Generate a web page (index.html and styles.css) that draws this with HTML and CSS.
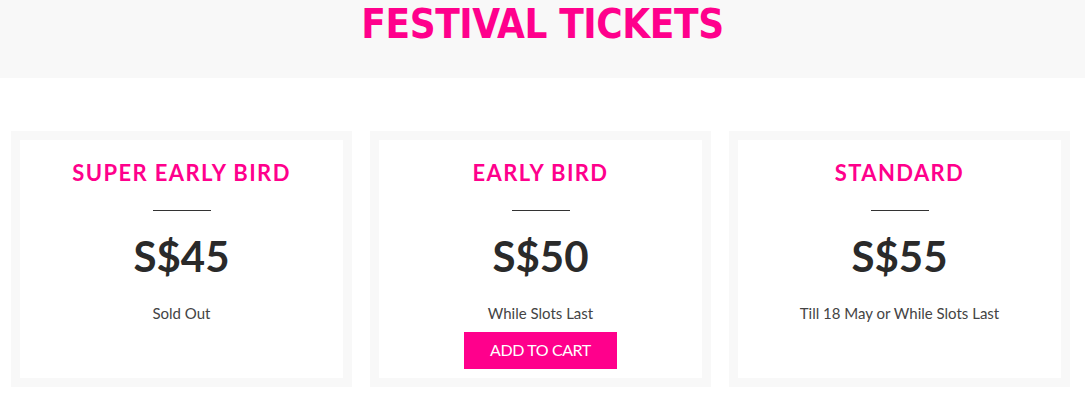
FILE: index.html
```html
<!DOCTYPE html>
<html lang="en">
<head>
<meta charset="utf-8">
<title>Festival Tickets</title>
<link rel="stylesheet" href="styles.css">
</head>
<body>
<header class="banner">
  <h1 class="banner-title">FESTIVAL TICKETS</h1>
</header>
<main class="tickets">
  <section class="card">
    <h2 class="card-title">SUPER EARLY BIRD</h2>
    <hr class="divider">
    <div class="price">S$45</div>
    <p class="note">Sold Out</p>
  </section>
  <section class="card">
    <h2 class="card-title">EARLY BIRD</h2>
    <hr class="divider">
    <div class="price">S$50</div>
    <p class="note">While Slots Last</p>
    <button class="cart-btn" type="button">ADD TO CART</button>
  </section>
  <section class="card">
    <h2 class="card-title">STANDARD</h2>
    <hr class="divider">
    <div class="price">S$55</div>
    <p class="note">Till 18 May or While Slots Last</p>
  </section>
</main>
</body>
</html>
```
FILE: styles.css
```css
* { box-sizing: border-box; }
html, body { margin: 0; padding: 0; background: #ffffff; }
body { font-family: Lato, "Open Sans", sans-serif; }

.banner {
  height: 78px;
  background: #f8f8f8;
  display: flex;
  justify-content: center;
  align-items: flex-start;
}
.banner-title {
  margin: 0;
  padding-top: 1px;
  font-family: "DejaVu Sans Condensed", "DejaVu Sans", sans-serif;
  font-stretch: condensed;
  font-weight: 700;
  font-size: 40px;
  color: #ff008c;
  letter-spacing: -0.4px;
}

.tickets {
  display: flex;
  gap: 18px;
  padding: 0 0 0 11px;
  margin-top: 53px;
}
.card {
  width: 341px;
  height: 256px;
  border: 9px solid #f8f8f8;
  display: flex;
  flex-direction: column;
  align-items: center;
  padding-top: 19px;
}
.card-title {
  margin: 0;
  font-family: Lato, sans-serif;
  font-weight: 700;
  font-size: 22px;
  color: #ff008c;
  letter-spacing: 1.4px;
}
.divider {
  width: 58px;
  height: 1px;
  border: 0;
  margin: 24px 0 0;
  background: #333333;
}
.price {
  margin-top: 20px;
  font-family: Lato, sans-serif;
  font-weight: 700;
  font-size: 42px;
  color: #2a2a2a;
}
.note {
  margin: 23px 0 0;
  font-family: Lato, sans-serif;
  font-size: 15px;
  color: #444444;
}
.cart-btn {
  margin-top: 10px;
  width: 153px;
  height: 37px;
  border: 0;
  background: #ff008c;
  color: #ffffff;
  font-family: Lato, sans-serif;
  font-size: 16px;
  letter-spacing: -0.4px;
  padding: 0 0 2px;
  cursor: pointer;
}
```
